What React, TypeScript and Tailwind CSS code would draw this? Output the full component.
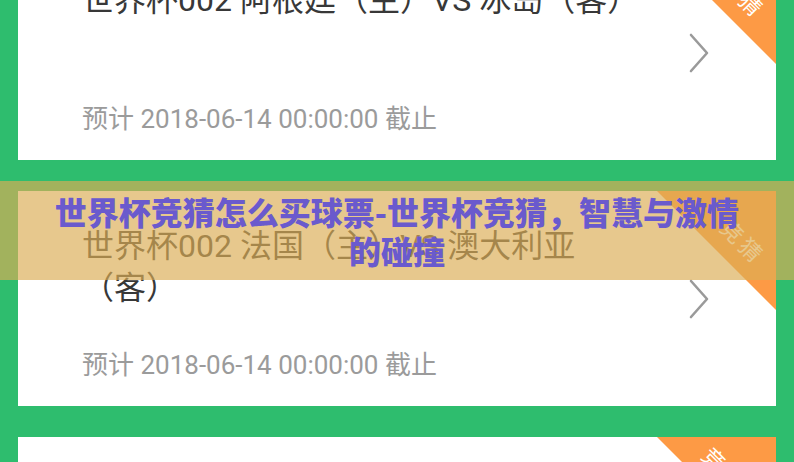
import React from 'react';

type Match = {
  title: string;
  tag: string;
};

const matches: Match[] = [
  { title: '世界杯002 阿根廷（主）VS 冰岛（客）', tag: '竞猜' },
  { title: '世界杯002 法国（主）VS 澳大利亚（客）', tag: '竞猜' },
  { title: '世界杯002 巴西（主）VS 瑞士（客）', tag: '竞猜结束' },
];

const cardFont = { fontFamily: 'Roboto, "Noto Sans CJK SC", sans-serif' };

function Chevron() {
  return (
    <svg
      width="22"
      height="40"
      viewBox="0 0 22 40"
      fill="none"
      className="absolute right-[66px] top-1/2 -translate-y-1/2"
    >
      <path d="M3 2 L19 20 L3 38" stroke="#9a9a9a" strokeWidth="2.6" strokeLinecap="round" strokeLinejoin="round" />
    </svg>
  );
}

function CornerTag({ text }: { text: string }) {
  return (
    <div className="absolute top-0 right-0 w-[119px] h-[119px] bg-[#fd9a45] [clip-path:polygon(0_0,100%_0,100%_100%)]">
      <span className="absolute left-[85px] top-[52px] -translate-x-1/2 -translate-y-1/2 rotate-45 whitespace-nowrap text-[22px] leading-none tracking-[4px] text-white">
        {text}
      </span>
    </div>
  );
}

function MatchCard({ match }: { match: Match }) {
  return (
    <div className="relative h-[215px] shrink-0 bg-white overflow-hidden flex flex-col pl-[64px] pt-[34px] pb-[26px]" style={cardFont}>
      <p className="w-[560px] text-[32px] leading-[42px] text-[#383838]">{match.title}</p>
      <p className="mt-auto text-[26px] leading-[30px] text-[#9b9b9b]">预计 2018-06-14 00:00:00 截止</p>
      <Chevron />
      <CornerTag text={match.tag} />
    </div>
  );
}

export default function App() {
  return (
    <div className="relative w-[794px] h-[462px] overflow-hidden bg-[#2ebd6e]">
      {/* scrolled list of matches */}
      <div className="-mt-[55px] px-[18px] flex flex-col gap-[31px]">
        {matches.map((m, i) => (
          <MatchCard key={i} match={m} />
        ))}
      </div>

      {/* headline strip */}
      <div className="absolute left-0 right-0 top-[181px] h-[99px] bg-[rgba(219,173,85,0.67)] flex items-center justify-center">
        <h1
          className="w-[700px] text-center text-[32px] leading-[39px] font-black text-[#6a5acd]"
          style={{ fontFamily: '"Noto Sans CJK SC", "Noto Sans", sans-serif' }}
        >
          世界杯竞猜怎么买球票-世界杯竞猜，智慧与激情的碰撞
        </h1>
      </div>
    </div>
  );
}
